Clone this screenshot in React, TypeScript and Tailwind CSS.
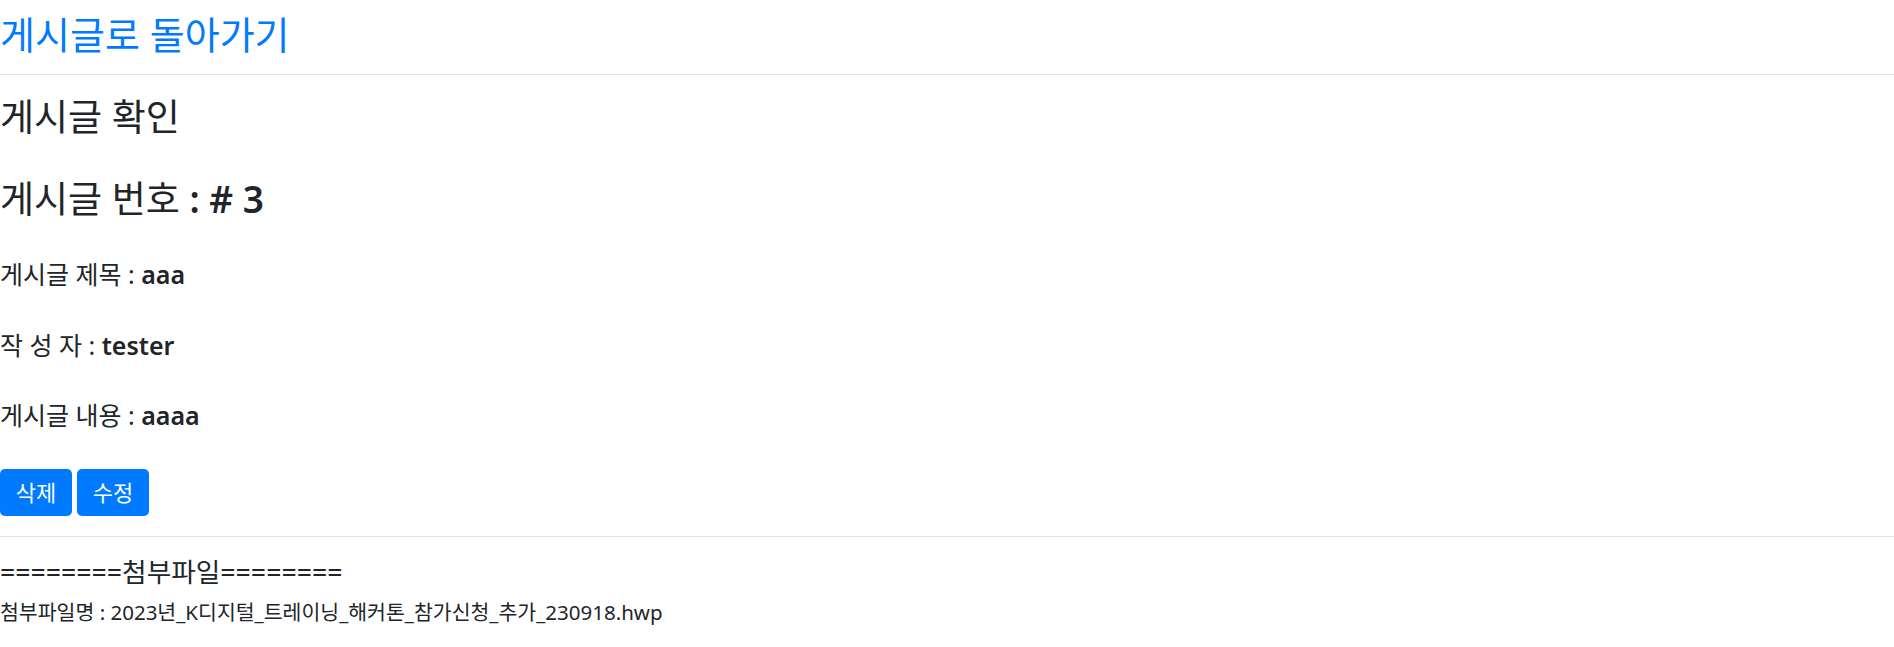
import * as React from "react";

/** Post detail page — plain bootstrap-ish read-only view with attachment list. */
export default function App() {
  const post = { no: 3, title: "aaa", writer: "tester", content: "aaaa" };
  const fileName = "2023년_K디지털_트레이닝_해커톤_참가신청_추가_230918.hwp";

  return (
    <div className="min-h-screen bg-white font-['Noto_Sans','Noto_Sans_CJK_KR',sans-serif] text-[#212529]">
      <a href="#" className="mt-[10px] block text-[38px] leading-[48px] text-[#007bff]">
        게시글로 돌아가기
      </a>
      <hr className="mt-[16px] border-t border-[#e5e5e5]" />

      <h2 className="mt-[22px] text-[37px] leading-[40px]">게시글 확인</h2>
      <h2 className="mt-[42px] text-[37px] leading-[40px]">
        게시글 번호 <span className="font-semibold">: # {post.no}</span>
      </h2>

      <h5 className="mt-[40px] text-[25px] leading-[30px]">
        게시글 제목 : <span className="font-semibold">{post.title}</span>
      </h5>
      <h5 className="mt-[41px] text-[25px] leading-[30px]">
        작 성 자 : <span className="font-semibold">{post.writer}</span>
      </h5>
      <h5 className="mt-[40px] text-[25px] leading-[30px]">
        게시글 내용 : <span className="font-semibold">{post.content}</span>
      </h5>

      <div className="mt-[39px] flex gap-[5px]">
        <button className="h-[47px] w-[72px] rounded-[5px] bg-[#007bff] text-[22px] text-white">
          삭제
        </button>
        <button className="h-[47px] w-[72px] rounded-[5px] bg-[#007bff] text-[22px] text-white">
          수정
        </button>
      </div>
      <hr className="mt-[20px] border-t border-[#e5e5e5]" />

      <h4 className="mt-[19px] text-[26.7px] leading-[32px]">========첨부파일========</h4>
      <p className="mt-[12px] text-[20.5px] leading-[24px]">첨부파일명 : {fileName}</p>
    </div>
  );
}
